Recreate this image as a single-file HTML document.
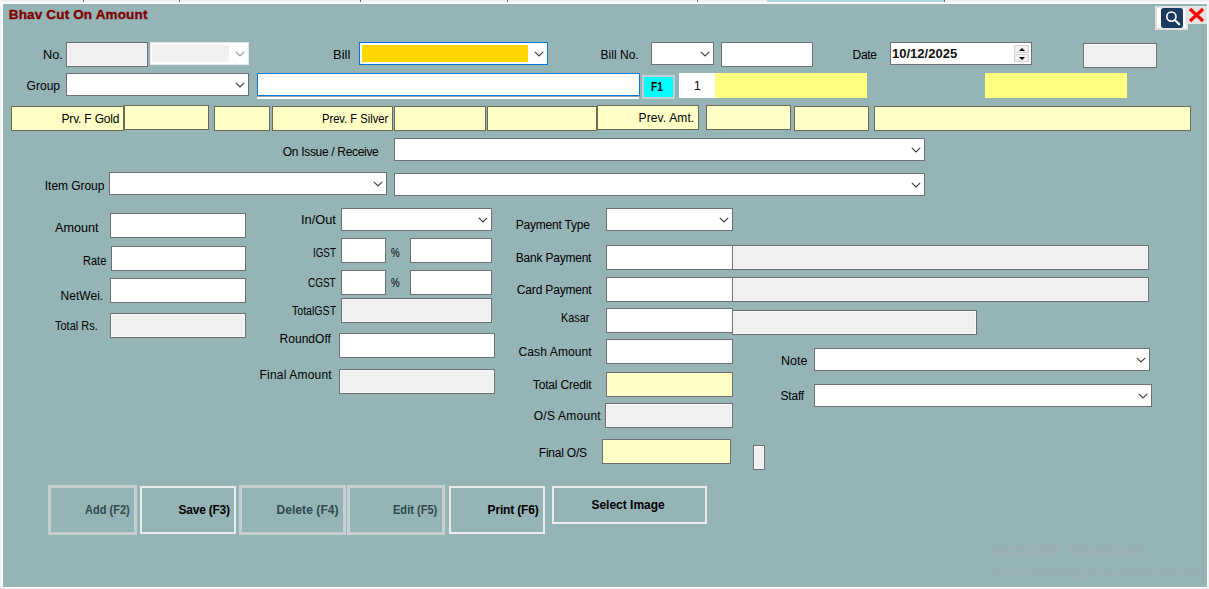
<!DOCTYPE html>
<html lang="en"><head><meta charset="utf-8"><title>Bhav Cut On Amount</title>
<style>
html,body{margin:0;padding:0}
body{width:1209px;height:589px;overflow:hidden;position:relative;background:#f0f0f0;
 font-family:"Liberation Sans",sans-serif;font-size:12px;color:#000}
.strip{position:absolute;left:0;top:2px;width:1209px;height:2px;background:#fdfdfd}
.tabsel{position:absolute;left:767px;top:0;width:177px;height:4px;background:#add8e6}
.tick{position:absolute;top:0;width:1px;height:2px;background:#6a6a6a}
.frame{position:absolute;left:1px;top:2px;width:1207px;height:586px;background:#fbfdfd}
.panel{position:absolute;left:0;top:0;width:1209px;height:589px;overflow:hidden;
 clip-path:inset(4px 2px 2px 3px);background:#94b4b6}
.panel>div,.panel>span{position:absolute;box-sizing:border-box}
.lb,.title{white-space:nowrap;line-height:1;color:#000;transform-origin:0 0}
.title{font-weight:bold;color:#800000;-webkit-text-stroke:.35px #800000}
.b{font-weight:bold}
.off{color:#2f4a4d}
.dtxt{font-weight:bold;color:#111}
.wm{color:#a8a8b4;opacity:.5}
.tb{background:#fff;border:1px solid #6c7070}
.tb.dis{background:#f0f0f0;box-shadow:inset 0 0 0 1px #f7f7f7}
.tb.ylw{background:#ffffc6}
.tb.focus{border-color:#0078d7}
.under{background:#fff;border-top:1px solid #9aa6a7}
.pl{background:#ffffc6;border:1px solid #6a6a55}
.cb{background:#fff;border:1px solid #6c7070}
.cb .chev{position:absolute;right:3px;top:8px}
.cbfocus{border-color:#0078d7}
.cbdis{border-color:#dfe7e7}
.cbdisin{position:absolute;left:1px;top:2px;right:19px;bottom:2px;background:#f0f0f0}
.gold{position:absolute;left:2px;top:2px;right:19px;bottom:2px;background:#ffd700}
.dtp{background:#fff;border:1px solid #6c7070}
.spin{position:absolute;left:123px;width:15px;height:8px;background:#f0f0f0;border:1px solid #d2d2d2;box-sizing:border-box}
.spin.up{top:2px}
.spin.dn{top:11px}
.spin i{position:absolute;left:3.5px;top:1.5px;width:0;height:0;border-left:3px solid transparent;border-right:3px solid transparent}
.spin.up i{border-bottom:3px solid #000}
.spin.dn i{border-top:3px solid #000}
.f1{background:#00ffff;border:2px solid #c3cfd0}
.white{background:#fff}
.yel{background:#ffff80}
.btn{border:2px solid #e8ecec;background:#94b4b6}
.btn.off{border:3px solid #c6d0d1}
.srch{left:1155px;top:6px;width:33px;height:24px;background:#e1e1e1}
.srchw{position:absolute;left:2px;top:2px;width:29px;height:20px;background:#fff}
.srchi{position:absolute;left:6px;top:2px;width:22px;height:20px;background:#1c3b60;border-radius:2.5px}
.srchi svg,.cls svg{display:block}
.cls{left:1185px;top:6px;width:22px;height:18px;background:#e4e4e4}
</style></head>
<body>
<div class="strip"></div>
<div class="tabsel"></div>
<div class="tick" style="left:83px"></div>
<div class="tick" style="left:179px"></div>
<div class="tick" style="left:360px"></div>
<div class="tick" style="left:507px"></div>
<div class="tick" style="left:697px"></div>
<div class="tick" style="left:944px;height:3px"></div>
<div class="frame"></div>
<div class="panel">
<span class="title" style="left:8.80px;top:8px;font-size:13.5px;letter-spacing:0.153px">Bhav Cut On Amount</span>
<div class="srch"><div class="srchw"></div><div class="srchi"><svg viewBox="0 0 22 20" width="22" height="20"><circle cx="10.4" cy="8.6" r="4.6" fill="none" stroke="#fff" stroke-width="1.6"/><path d="M13.8 12 L18.2 16.2" stroke="#fff" stroke-width="2.1" stroke-linecap="round"/></svg></div></div>
<div class="cls"><svg viewBox="0 0 22 18" width="22" height="18"><path d="M5 3 L18 15 M18 3 L5 15" stroke="#ff0000" stroke-width="3.2" fill="none"/></svg></div>
<span class="lb" style="left:42.55px;top:49px;font-size:12px;transform:scaleX(1.0647)">No.</span>
<div class="tb dis" style="left:66px;top:42px;width:82px;height:25px;"></div>
<div class="cb cbdis" style="left:150px;top:42px;width:99px;height:23px;"><div class="cbdisin"></div><svg class="chev" viewBox="0 0 10 6" width="10" height="6"><path d="M0.8 0.8 L5 5 L9.2 0.8" fill="none" stroke="#9a9a9a" stroke-width="1.15"/></svg></div>
<span class="lb" style="left:333.05px;top:49px;font-size:12px;transform:scaleX(1.0786)">Bill</span>
<div class="cb cbfocus" style="left:359px;top:42px;width:189px;height:23px;"><div class="gold"></div><svg class="chev" viewBox="0 0 10 6" width="10" height="6"><path d="M0.8 0.8 L5 5 L9.2 0.8" fill="none" stroke="#404040" stroke-width="1.15"/></svg></div>
<span class="lb" style="left:600.55px;top:49px;font-size:12px;letter-spacing:0.014px">Bill No.</span>
<div class="cb" style="left:651px;top:42px;width:63px;height:23px;"><svg class="chev" viewBox="0 0 10 6" width="10" height="6"><path d="M0.8 0.8 L5 5 L9.2 0.8" fill="none" stroke="#404040" stroke-width="1.15"/></svg></div>
<div class="tb" style="left:721px;top:42px;width:92px;height:25px;"></div>
<span class="lb" style="left:852.55px;top:49px;font-size:12px;letter-spacing:-0.300px">Date</span>
<div class="dtp" style="left:890px;top:42px;width:142px;height:23px;"><div class="spin up"><i></i></div><div class="spin dn"><i></i></div></div>
<span class="lb dtxt" style="left:892.20px;top:48px;font-size:12px;transform:scaleX(1.0847)">10/12/2025</span>
<div class="tb dis" style="left:1083px;top:43px;width:74px;height:25px;"></div>
<span class="lb" style="left:26.55px;top:80px;font-size:12px;letter-spacing:0.025px">Group</span>
<div class="cb" style="left:66px;top:73px;width:183px;height:23px;"><svg class="chev" viewBox="0 0 10 6" width="10" height="6"><path d="M0.8 0.8 L5 5 L9.2 0.8" fill="none" stroke="#404040" stroke-width="1.15"/></svg></div>
<div class="under" style="left:257px;top:96px;width:382px;height:3px;"></div>
<div class="tb focus" style="left:257px;top:73px;width:383px;height:23px;"></div>
<div class="f1" style="left:642px;top:75px;width:33px;height:24px;"></div>
<span class="lb b" style="left:650.70px;top:81px;font-size:12px;transform:scaleX(0.8462)">F1</span>
<div class="white" style="left:679px;top:73px;width:36px;height:25px;"></div>
<span class="lb" style="left:694.00px;top:80px;font-size:12px">1</span>
<div class="yel" style="left:715px;top:73px;width:152px;height:25px;"></div>
<div class="yel" style="left:985px;top:73px;width:142px;height:25px;"></div>
<div class="pl" style="left:11px;top:106px;width:113px;height:25px;"></div>
<span class="lb" style="left:61.55px;top:113px;font-size:12px;letter-spacing:-0.190px">Prv. F Gold</span>
<div class="pl" style="left:124px;top:105px;width:85px;height:25px;"></div>
<div class="pl" style="left:214px;top:106px;width:56px;height:25px;"></div>
<div class="pl" style="left:272px;top:106px;width:121px;height:25px;"></div>
<span class="lb" style="left:321.55px;top:113px;font-size:12px;transform:scaleX(0.9300)">Prev. F Silver</span>
<div class="pl" style="left:394px;top:106px;width:92px;height:25px;"></div>
<div class="pl" style="left:487px;top:106px;width:110px;height:25px;"></div>
<div class="pl" style="left:597px;top:105px;width:102px;height:25px;"></div>
<span class="lb" style="left:638.55px;top:112px;font-size:12px;letter-spacing:0.133px">Prev. Amt.</span>
<div class="pl" style="left:706px;top:105px;width:85px;height:25px;"></div>
<div class="pl" style="left:794px;top:106px;width:75px;height:25px;"></div>
<div class="pl" style="left:874px;top:106px;width:317px;height:25px;"></div>
<span class="lb" style="left:282.80px;top:146px;font-size:12px;letter-spacing:-0.318px">On Issue / Receive</span>
<div class="cb" style="left:394px;top:138px;width:531px;height:23px;"><svg class="chev" viewBox="0 0 10 6" width="10" height="6"><path d="M0.8 0.8 L5 5 L9.2 0.8" fill="none" stroke="#404040" stroke-width="1.15"/></svg></div>
<span class="lb" style="left:44.80px;top:180px;font-size:12px;letter-spacing:-0.044px">Item Group</span>
<div class="cb" style="left:109px;top:172px;width:278px;height:23px;"><svg class="chev" viewBox="0 0 10 6" width="10" height="6"><path d="M0.8 0.8 L5 5 L9.2 0.8" fill="none" stroke="#404040" stroke-width="1.15"/></svg></div>
<div class="cb" style="left:394px;top:173px;width:531px;height:23px;"><svg class="chev" viewBox="0 0 10 6" width="10" height="6"><path d="M0.8 0.8 L5 5 L9.2 0.8" fill="none" stroke="#404040" stroke-width="1.15"/></svg></div>
<span class="lb" style="left:55.05px;top:222px;font-size:12px;transform:scaleX(1.0512)">Amount</span>
<div class="tb" style="left:110px;top:213px;width:136px;height:25px;"></div>
<span class="lb" style="left:82.55px;top:255px;font-size:12px;transform:scaleX(0.9208)">Rate</span>
<div class="tb" style="left:111px;top:246px;width:135px;height:25px;"></div>
<span class="lb" style="left:60.55px;top:290px;font-size:12px;letter-spacing:0.033px">NetWei.</span>
<div class="tb" style="left:110px;top:278px;width:136px;height:25px;"></div>
<span class="lb" style="left:54.55px;top:320px;font-size:12px;transform:scaleX(0.9152)">Total Rs.</span>
<div class="tb dis" style="left:110px;top:313px;width:136px;height:25px;"></div>
<span class="lb" style="left:300.55px;top:214px;font-size:12px;transform:scaleX(1.0656)">In/Out</span>
<div class="cb" style="left:341px;top:208px;width:151px;height:23px;"><svg class="chev" viewBox="0 0 10 6" width="10" height="6"><path d="M0.8 0.8 L5 5 L9.2 0.8" fill="none" stroke="#404040" stroke-width="1.15"/></svg></div>
<span class="lb" style="left:312.55px;top:247px;font-size:12px;transform:scaleX(0.8185)">IGST</span>
<div class="tb" style="left:341px;top:238px;width:45px;height:25px;"></div>
<span class="lb" style="left:390.55px;top:247px;font-size:12px;transform:scaleX(0.8100)">%</span>
<div class="tb" style="left:410px;top:238px;width:82px;height:25px;"></div>
<span class="lb" style="left:308.30px;top:277px;font-size:12px;transform:scaleX(0.8313)">CGST</span>
<div class="tb" style="left:341px;top:270px;width:45px;height:25px;"></div>
<span class="lb" style="left:390.55px;top:277px;font-size:12px;transform:scaleX(0.8100)">%</span>
<div class="tb" style="left:410px;top:270px;width:82px;height:25px;"></div>
<span class="lb" style="left:291.55px;top:305px;font-size:12px;transform:scaleX(0.8820)">TotalGST</span>
<div class="tb dis" style="left:341px;top:298px;width:151px;height:25px;"></div>
<span class="lb" style="left:279.55px;top:333px;font-size:12px;letter-spacing:0.029px">RoundOff</span>
<div class="tb" style="left:339px;top:333px;width:156px;height:25px;"></div>
<span class="lb" style="left:259.55px;top:369px;font-size:12px;letter-spacing:0.191px">Final Amount</span>
<div class="tb dis" style="left:339px;top:369px;width:156px;height:25px;"></div>
<span class="lb" style="left:515.80px;top:219px;font-size:12px;letter-spacing:-0.218px">Payment Type</span>
<div class="cb" style="left:606px;top:208px;width:127px;height:23px;"><svg class="chev" viewBox="0 0 10 6" width="10" height="6"><path d="M0.8 0.8 L5 5 L9.2 0.8" fill="none" stroke="#404040" stroke-width="1.15"/></svg></div>
<span class="lb" style="left:515.80px;top:252px;font-size:12px;letter-spacing:-0.218px">Bank Payment</span>
<div class="tb dis" style="left:732px;top:245px;width:417px;height:25px;"></div>
<div class="tb" style="left:606px;top:245px;width:127px;height:25px;"></div>
<span class="lb" style="left:516.80px;top:284px;font-size:12px;letter-spacing:-0.164px">Card Payment</span>
<div class="tb dis" style="left:732px;top:277px;width:417px;height:25px;"></div>
<div class="tb" style="left:606px;top:277px;width:127px;height:25px;"></div>
<span class="lb" style="left:560.55px;top:312px;font-size:12px;transform:scaleX(0.9033)">Kasar</span>
<div class="tb dis" style="left:732px;top:310px;width:245px;height:25px;"></div>
<div class="tb" style="left:606px;top:308px;width:127px;height:25px;"></div>
<span class="lb" style="left:518.55px;top:346px;font-size:12px;letter-spacing:0.110px">Cash Amount</span>
<div class="tb" style="left:606px;top:339px;width:127px;height:25px;"></div>
<span class="lb" style="left:532.80px;top:379px;font-size:12px;letter-spacing:-0.164px">Total Credit</span>
<div class="tb ylw" style="left:606px;top:372px;width:127px;height:25px;"></div>
<span class="lb" style="left:533.80px;top:410px;font-size:12px;letter-spacing:0.244px">O/S Amount</span>
<div class="tb dis" style="left:605px;top:403px;width:128px;height:25px;"></div>
<span class="lb" style="left:538.80px;top:447px;font-size:12px;letter-spacing:-0.225px">Final O/S</span>
<div class="tb ylw" style="left:602px;top:439px;width:129px;height:25px;"></div>
<div class="tb dis" style="left:753px;top:445px;width:12px;height:25px;"></div>
<span class="lb" style="left:780.55px;top:355px;font-size:12px;transform:scaleX(1.0458)">Note</span>
<div class="cb" style="left:814px;top:348px;width:336px;height:23px;"><svg class="chev" viewBox="0 0 10 6" width="10" height="6"><path d="M0.8 0.8 L5 5 L9.2 0.8" fill="none" stroke="#404040" stroke-width="1.15"/></svg></div>
<span class="lb" style="left:780.55px;top:390px;font-size:12px;letter-spacing:-0.225px">Staff</span>
<div class="cb" style="left:814px;top:384px;width:338px;height:23px;"><svg class="chev" viewBox="0 0 10 6" width="10" height="6"><path d="M0.8 0.8 L5 5 L9.2 0.8" fill="none" stroke="#404040" stroke-width="1.15"/></svg></div>
<div class="btn off" style="left:48px;top:485px;width:89px;height:50px;"></div>
<span class="lb b off" style="left:85.05px;top:504px;font-size:12px;transform:scaleX(0.9187)">Add (F2)</span>
<div class="btn" style="left:140px;top:486px;width:96px;height:48px;"></div>
<span class="lb b" style="left:178.55px;top:504px;font-size:12px;letter-spacing:-0.238px">Save (F3)</span>
<div class="btn off" style="left:239px;top:485px;width:107px;height:50px;"></div>
<span class="lb b off" style="left:276.40px;top:504px;font-size:12px;letter-spacing:0.080px">Delete (F4)</span>
<div class="btn off" style="left:347px;top:485px;width:98px;height:50px;"></div>
<span class="lb b off" style="left:393.15px;top:504px;font-size:12px;transform:scaleX(0.9213)">Edit (F5)</span>
<div class="btn" style="left:449px;top:486px;width:96px;height:48px;"></div>
<span class="lb b" style="left:487.60px;top:504px;font-size:12px;letter-spacing:-0.178px">Print (F6)</span>
<div class="btn" style="left:552px;top:486px;width:155px;height:38px;"></div>
<span class="lb b" style="left:591.45px;top:499px;font-size:12px;letter-spacing:-0.009px">Select Image</span>
<span class="lb wm" style="left:991.55px;top:541px;font-size:18px;transform:scaleX(1.0929)">Activate Windows</span>
<span class="lb wm" style="left:990.80px;top:566px;font-size:13px;transform:scaleX(1.1310)">Go to Settings to activate Windows.</span>
</div>
</body></html>
